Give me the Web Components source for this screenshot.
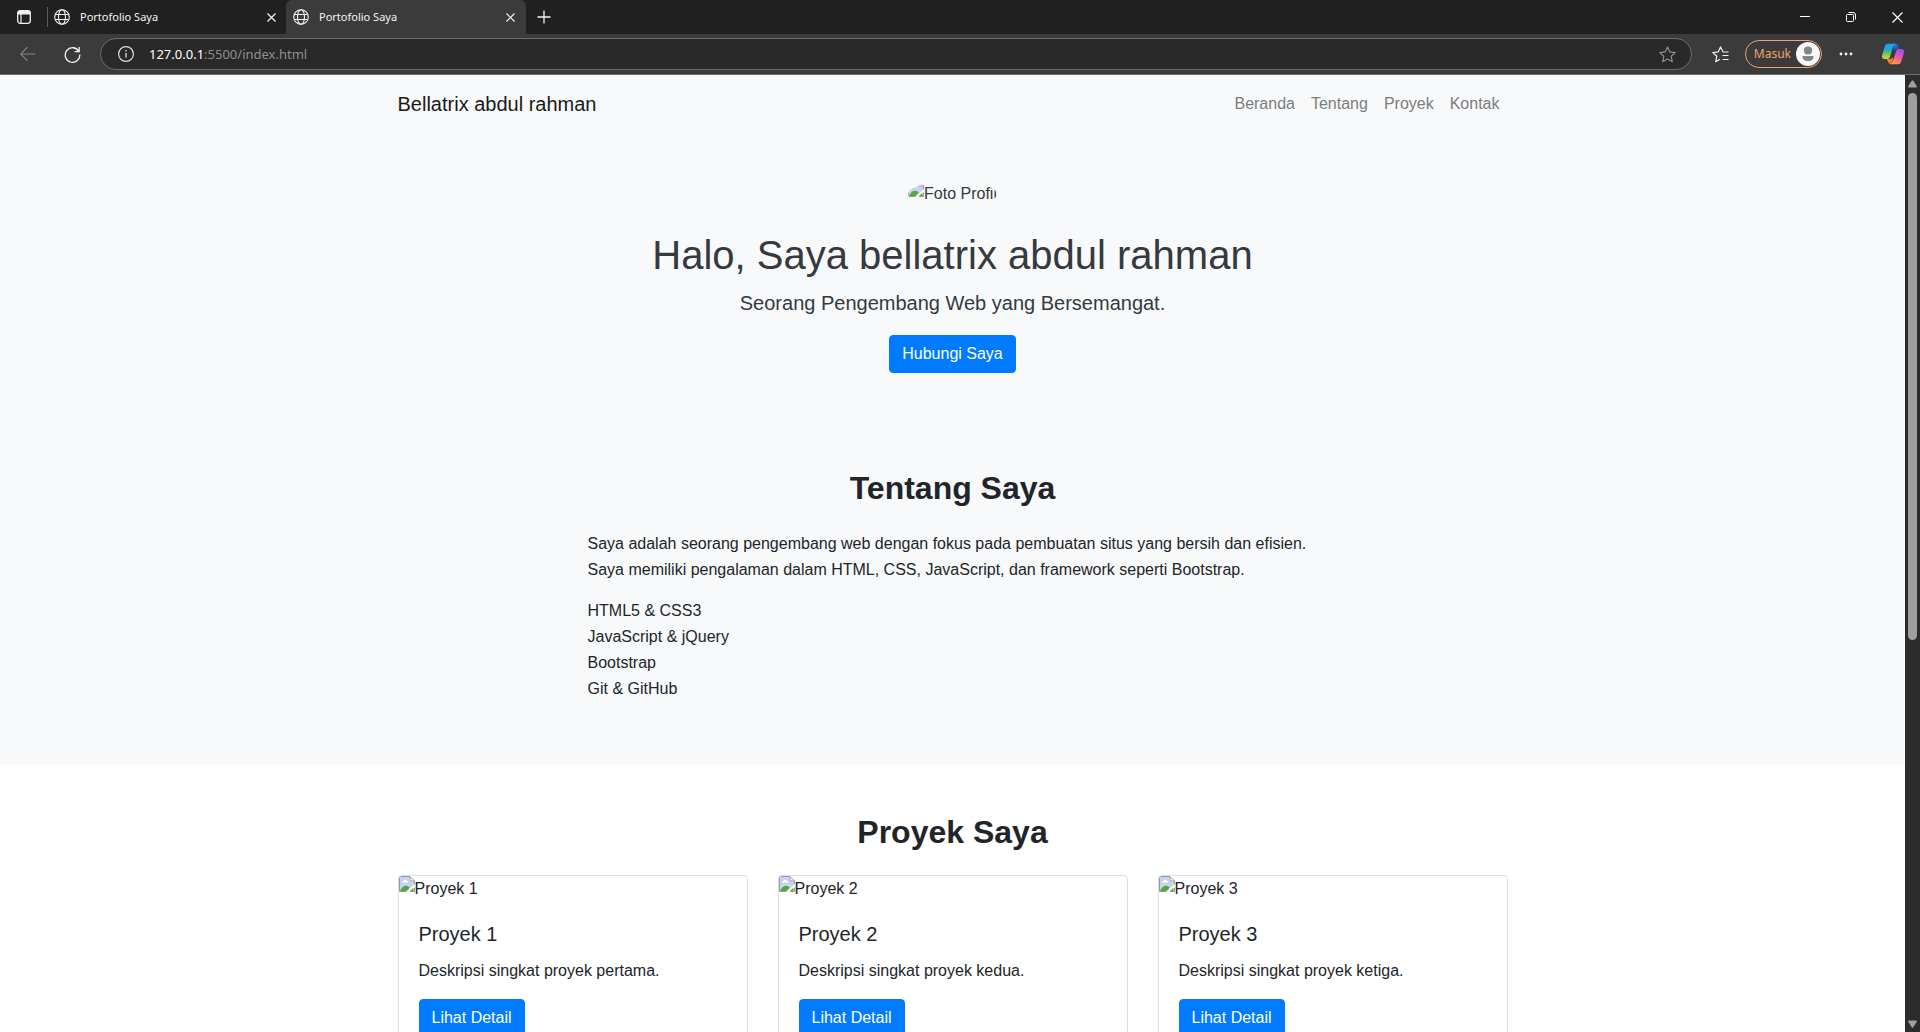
<!DOCTYPE html>
<html lang="id">
<head>
<meta charset="utf-8">
<title>Portofolio Saya</title>
<style>
html, body { height: 100%; margin: 0; }
body { overflow: hidden; font-family: "Liberation Sans", Arial, sans-serif; font-size: 16px; line-height: 26px; color: #212529; }
</style>
</head>
<body>
<browser-window>
  <tab-strip slot="chrome">
    <browser-tab>Portofolio Saya</browser-tab>
    <browser-tab active>Portofolio Saya</browser-tab>
  </tab-strip>
  <browser-toolbar slot="chrome"></browser-toolbar>
  <site-navbar brand="Bellatrix abdul rahman">
    <nav-link href="#beranda">Beranda</nav-link>
    <nav-link href="#tentang">Tentang</nav-link>
    <nav-link href="#proyek">Proyek</nav-link>
    <nav-link href="#kontak">Kontak</nav-link>
  </site-navbar>
  <site-hero id="beranda">
    <missing-image slot="photo" round>Foto Profil</missing-image>
    <span slot="title">Halo, Saya bellatrix abdul rahman</span>
    <span slot="lead">Seorang Pengembang Web yang Bersemangat.</span>
    <link-button href="#kontak">Hubungi Saya</link-button>
  </site-hero>
  <page-section id="tentang" heading="Tentang Saya" tinted>
    <about-text></about-text>
  </page-section>
  <page-section id="proyek" heading="Proyek Saya">
    <card-row>
      <project-card name="Proyek 1">Deskripsi singkat proyek pertama.</project-card>
      <project-card name="Proyek 2">Deskripsi singkat proyek kedua.</project-card>
      <project-card name="Proyek 3">Deskripsi singkat proyek ketiga.</project-card>
    </card-row>
  </page-section>
</browser-window>

<script>
const define = (name, html, setup) => {
  const template = document.createElement('template');
  template.innerHTML = html;
  customElements.define(name, class extends HTMLElement {
    constructor() {
      super();
      this.attachShadow({ mode: 'open' }).append(template.content.cloneNode(true));
    }
    connectedCallback() { if (setup) setup(this, this.shadowRoot); }
  });
};

const buttonReset = `
  button { display: flex; align-items: center; justify-content: center; flex: none; margin: 0; padding: 0; border: 0; background: none; color: inherit; font: inherit; }
  svg { display: block; flex: none; fill: none; stroke: currentColor; }
  svg.solid { stroke: none; }`;

define('browser-window', `
<style>
  :host { display: flex; flex-direction: column; height: 100vh; background: #3b3b3b; }
  .view { display: flex; flex: 1; min-height: 0; border-top: 1px solid #6e6e6e; background: #fff; }
  main { flex: 1; min-width: 0; overflow: hidden; }
</style>
<slot name="chrome"></slot>
<div class="view"><main><slot></slot></main><scroll-bar></scroll-bar></div>`);

define('scroll-bar', `
<style>
  :host { display: flex; flex-direction: column; align-items: center; gap: 5px; box-sizing: border-box; width: 15px; padding: 5px 0 4px; background: #2c2c2c; }
  svg { display: block; flex: none; fill: #9f9f9f; }
  .track { display: flex; flex-direction: column; flex: 1; }
  .thumb { flex: 548; width: 9px; border-radius: 5px; background: #9f9f9f; }
  .rest { flex: 375; }
</style>
<svg width="9" height="8" viewBox="0 0 9 8"><path d="M3.7.7a1 1 0 0 1 1.6 0L8.8 6.200Q9.200 7.500 8 7.500H1Q-.2 7.500.2 6.200Z"/></svg>
<div class="track"><div class="thumb"></div><div class="rest"></div></div>
<svg width="9" height="8" viewBox="0 0 9 8"><path d="M3.700 7.300a1 1 0 0 0 1.600 0L8.800 1.800Q9.200.5 8 .5H1Q-.2.5.2 1.800Z"/></svg>`);

define('tab-strip', `
<style>
  ${buttonReset}
  :host { display: flex; align-items: center; height: 34px; background: #202020; color: #f2f2f2; }
  .menu { width: 47px; height: 34px; }
  .rule { width: 1px; height: 20px; background: #5c5c5c; }
  .new { width: 35px; height: 34px; }
  .controls { display: flex; margin-left: auto; color: #fff; }
  .controls button { width: 46px; height: 34px; }
</style>
<button class="menu" aria-label="Menu tab"><svg width="16" height="16" viewBox="0 0 16 16"><rect x="1.700" y="1.700" width="12.600" height="12.600" rx="2.500" stroke-width="1.300"/><path d="M2 3.500Q2 2 3.500 2h9Q14 2 14 3.500V5H2Z" fill="currentColor"/><path d="M5 5v9" stroke-width="1.200"/></svg></button>
<div class="rule"></div>
<slot></slot>
<button class="new" aria-label="Tab baru"><svg width="14" height="14" viewBox="0 0 14 14"><path d="M7 .5v13M.5 7h13" stroke-width="1.300"/></svg></button>
<div class="controls">
  <button aria-label="Minimalkan"><svg width="10" height="10" viewBox="0 0 10 10"><path d="M0 4.500h10"/></svg></button>
  <button aria-label="Pulihkan"><svg width="10" height="10" viewBox="0 0 10 10"><rect x=".5" y="2.500" width="7" height="7" rx="1"/><path d="M2.500.5H7Q9.500.5 9.500 3v4.500"/></svg></button>
  <button aria-label="Tutup"><svg width="11" height="11" viewBox="0 0 11 11"><path d="M.5.5l10 10M10.500.5l-10 10" stroke-width="1.200"/></svg></button>
</div>`);

define('browser-tab', `
<style>
  ${buttonReset}
  :host { display: flex; align-items: center; gap: 10px; box-sizing: border-box; width: 238px; height: 34px; padding: 0 9px 0 6px; font: 11px/16px "Noto Sans", "Open Sans", sans-serif; }
  :host([active]) { width: 240px; padding: 0 10px 0 7px; background: #3b3b3b; border-radius: 6px 6px 0 0; }
  .label { flex: 1; }
  button { width: 11px; height: 20px; }
</style>
<svg width="16" height="16" viewBox="0 0 16 16" stroke-width="1.100"><circle cx="8" cy="8" r="7.300"/><ellipse cx="8" cy="8" rx="3.500" ry="7.300"/><path d="M1.500 5.500h13M1.500 10.500h13"/></svg>
<span class="label"><slot></slot></span>
<button aria-label="Tutup tab"><svg width="9" height="9" viewBox="0 0 9 9"><path d="M.5.5l8 8M8.500.5l-8 8" stroke-width="1.200"/></svg></button>`);

define('browser-toolbar', `
<style>
  ${buttonReset}
  :host { display: flex; align-items: center; box-sizing: border-box; height: 40px; padding: 0 9px 0 10px; background: #3b3b3b; color: #f2f2f2; font: 13px/20px "Noto Sans", "Open Sans", sans-serif; }
  .icon { width: 36px; height: 32px; }
  .back { color: #858585; }
  .reload { margin: 0 10px 0 8px; }
  .address { display: flex; flex: 1; align-items: center; box-sizing: border-box; height: 32px; padding: 0 15px 0 17px; border: 1px solid #6b6b6b; border-radius: 16px; background: #292929; }
  .url { flex: 1; margin-left: 15px; color: #8e8e8e; }
  .url b { color: #fff; font-weight: 400; }
  .star { color: #8e8e8e; }
  .fav { margin-left: 11px; }
  .account { gap: 5px; height: 28px; box-sizing: border-box; margin: 0 6px; padding: 0 1px 0 8px; border: 1px solid #f2a265; border-radius: 14px; color: #f2a265; font-size: 12px; }
  .copilot { margin-left: 11px; }
</style>
<button class="icon back" aria-label="Kembali"><svg width="16" height="16" viewBox="0 0 16 16" stroke-width="1.100"><path d="M15.500 8H.7M7.500 1.200L.7 8l6.800 6.800"/></svg></button>
<button class="icon reload" aria-label="Muat ulang"><svg width="17" height="17" viewBox="0 0 17 17" stroke-width="1.300"><path d="M14.800 5.300A7.300 7.300 0 1 0 15.800 8.500M15.200 1v4.600h-4.600"/></svg></button>
<div class="address">
  <button aria-label="Informasi situs"><svg width="16" height="16" viewBox="0 0 16 16"><circle cx="8" cy="8" r="7.400" stroke="#ddd" stroke-width="1.200"/><path d="M8 7v4.500M8 4v1.500" stroke-width="1.200"/></svg></button>
  <span class="url"><b>127.0.0.1</b>:5500/index.html</span>
  <button class="star" aria-label="Tambahkan ke favorit"><svg width="17" height="17" viewBox="0 0 17 17" stroke-width="1.200" stroke-linejoin="round"><path d="M8.500 1l2.300 4.900 5.400.7-4 3.700 1.100 5.400-4.800-2.700-4.800 2.700 1.100-5.400-4-3.700 5.400-.7Z"/></svg></button>
</div>
<button class="icon fav" aria-label="Favorit"><svg width="17" height="17" viewBox="0 0 17 17" stroke-width="1.200" stroke-linejoin="round"><path d="M16.500 6h-5.300L8.500 1 6.200 5.900.8 6.600l4 3.700-1.100 5.400L8 13.300M10.500 9.500h6M10.500 13.500h6"/></svg></button>
<button class="account">Masuk<svg class="solid" width="24" height="24" viewBox="0 0 24 24"><circle cx="12" cy="12" r="12" fill="#f8f8f8"/><circle cx="12" cy="8.500" r="4" fill="#858585"/><path d="M6.500 14h11q.5 5-5.500 5t-5.500-5Z" fill="#858585"/></svg></button>
<button class="icon" aria-label="Lainnya"><svg class="solid" width="14" height="4" viewBox="0 0 14 4"><g fill="#f2f2f2"><circle cx="2" cy="2" r="1.400"/><circle cx="7" cy="2" r="1.400"/><circle cx="12" cy="2" r="1.400"/></g></svg></button>
<button class="icon copilot" aria-label="Copilot"><svg class="solid" width="24" height="22" viewBox="0 0 24 22">
  <defs>
    <linearGradient id="a" x1="0" y1="0" x2="0" y2="1"><stop offset="0" stop-color="#1ba4f5"/><stop offset=".4" stop-color="#22a7c8"/><stop offset=".65" stop-color="#6cc46c"/><stop offset="1" stop-color="#f2cf16"/></linearGradient>
    <linearGradient id="b" x1="0.700" y1="0" x2=".3" y2="1"><stop offset="0" stop-color="#a24cf0"/><stop offset=".5" stop-color="#e85aa4"/><stop offset="1" stop-color="#fb9a4a"/></linearGradient>
    <linearGradient id="c" x1="0" y1="0" x2="1" y2="1"><stop offset="0" stop-color="#1b8de8"/><stop offset="1" stop-color="#1440b4"/></linearGradient>
    <linearGradient id="d" x1="0" y1="0" x2="1" y2="1"><stop offset="0" stop-color="#f5a51e"/><stop offset="1" stop-color="#ee4a46"/></linearGradient>
  </defs>
  <path d="M12 .8h2.500q2.200 0 3 2.500l.9 2.700h-3q-1.800 0-2.500 2Z" fill="url(#c)"/>
  <path d="M6 15.900h3q1.800 0 2.500-2l1.400 6.300-1.500 1H10q-2.200 0-2.900-2.300Z" fill="url(#d)"/>
  <path d="M7 .8h7.500q-1.700.4-2.300 2.400L8.900 14q-.6 2-2.600 2H4Q0 16 1.300 11.500L3.800 3.300Q4.500.8 7 .8Z" fill="url(#a)"/>
  <path d="M17 21.200H9.500q1.700-.4 2.300-2.400L15.100 8q.6-2 2.600-2H20q4 0 2.700 4.500l-2.500 8.200q-.7 2.500-3.200 2.500Z" fill="url(#b)"/>
</svg></button>`);

define('site-navbar', `
<style>
  :host { display: block; padding: 8px 16px; background: #f8f9fa; }
  nav { display: flex; align-items: center; justify-content: space-between; max-width: 1110px; margin: 0 auto; }
  .brand { color: #191919; font-size: 20px; line-height: 32px; text-decoration: none; }
  .links { display: flex; }
</style>
<nav><a class="brand" href="#beranda"></a><div class="links"><slot></slot></div></nav>`,
(host, root) => { root.querySelector('.brand').textContent = host.getAttribute('brand'); });

define('nav-link', `
<style>
  :host { display: block; }
  a { display: block; padding: 8px; color: #7c7d7d; text-decoration: none; }
</style>
<a><slot></slot></a>`,
(host, root) => { root.querySelector('a').href = host.getAttribute('href'); });

define('missing-image', `
<style>
  :host { display: flex; width: fit-content; height: 26px; overflow: hidden; white-space: nowrap; }
  :host([round]) { border-radius: 50%; }
  svg { display: block; flex: none; }
</style>
<svg width="16" height="16" viewBox="0 0 16 16">
  <path d="M.5.500h10.500l4.500 4.500v10.500h-15Z" fill="#fff"/>
  <path d="M1 1h9.500v4.500H15v3.500L8 15H1Z" fill="#c3d4f5"/>
  <path d="M3 6.500q0-1.500 1.500-1.500.5-1.500 2-1.300 1.300.1 1.500 1.300 1.200.1 1.200 1.500Z" fill="#fff"/>
  <path d="M1 15q2.500-5.200 6-5.200 2.500 0 3.700 2L7.500 15Z" fill="#55a834"/>
  <path d="M11 15l3.500-3.200v3.200Z" fill="#55a834"/>
  <path d="M7.500 15.500h-7V.5H11l4.500 4.500v3.500M15.500 11.500v4H11M11 .5V5h4.500" fill="none" stroke="#9a9a9a"/>
</svg><span><slot></slot></span>`);

define('link-button', `
<style>
  :host { display: flex; width: fit-content; }
  a { padding: 5px 12px; border: 1px solid #007bff; border-radius: 4px; background: #007bff; color: #fff; text-decoration: none; }
</style>
<a><slot></slot></a>`,
(host, root) => { root.querySelector('a').href = host.getAttribute('href'); });

define('site-hero', `
<style>
  :host { display: flex; flex-direction: column; align-items: center; padding: 48px 0; background: #f8f9fa; color: #343a40; text-align: center; }
  h1 { margin: 24px 0 8px; font-size: 40px; line-height: 48px; font-weight: 400; }
  p { margin: 0 0 16px; font-size: 20px; line-height: 32px; }
</style>
<slot name="photo"></slot>
<h1><slot name="title"></slot></h1>
<p><slot name="lead"></slot></p>
<slot></slot>`);

define('page-section', `
<style>
  :host { display: block; padding: 48px 15px; }
  :host([tinted]) { background: #f8f9fa; }
  .container { max-width: 1110px; margin: 0 auto; }
  h2 { margin: 0 0 24px; font-size: 32px; line-height: 38px; font-weight: 700; text-align: center; }
</style>
<div class="container"><h2></h2><slot></slot></div>`,
(host, root) => { root.querySelector('h2').textContent = host.getAttribute('heading'); });

define('about-text', `
<style>
  :host { display: block; max-width: 730px; margin: 0 auto; }
  p, ul { margin: 0 0 15px; padding: 0; list-style: none; }
</style>
<p>Saya adalah seorang pengembang web dengan fokus pada pembuatan situs yang bersih dan efisien. Saya memiliki pengalaman dalam HTML, CSS, JavaScript, dan framework seperti Bootstrap.</p>
<ul><li>HTML5 &amp; CSS3</li><li>JavaScript &amp; jQuery</li><li>Bootstrap</li><li>Git &amp; GitHub</li></ul>`);

define('card-row', `
<style>
  :host { display: grid; grid-template-columns: repeat(3, 1fr); gap: 30px; }
</style>
<slot></slot>`);

define('project-card', `
<style>
  :host { display: block; overflow: hidden; border: 1px solid #dfdfdf; border-radius: 4px; background: #fff; }
  .body { padding: 20px; }
  h5 { margin: 0 0 12px; font-size: 20px; line-height: 24px; font-weight: 400; }
  p { margin: 0 0 15px; }
</style>
<missing-image></missing-image>
<div class="body"><h5></h5><p><slot></slot></p><link-button href="#proyek">Lihat Detail</link-button></div>`,
(host, root) => {
  const name = host.getAttribute('name');
  root.querySelector('missing-image').textContent = name;
  root.querySelector('h5').textContent = name;
});
</script>
</body>
</html>
